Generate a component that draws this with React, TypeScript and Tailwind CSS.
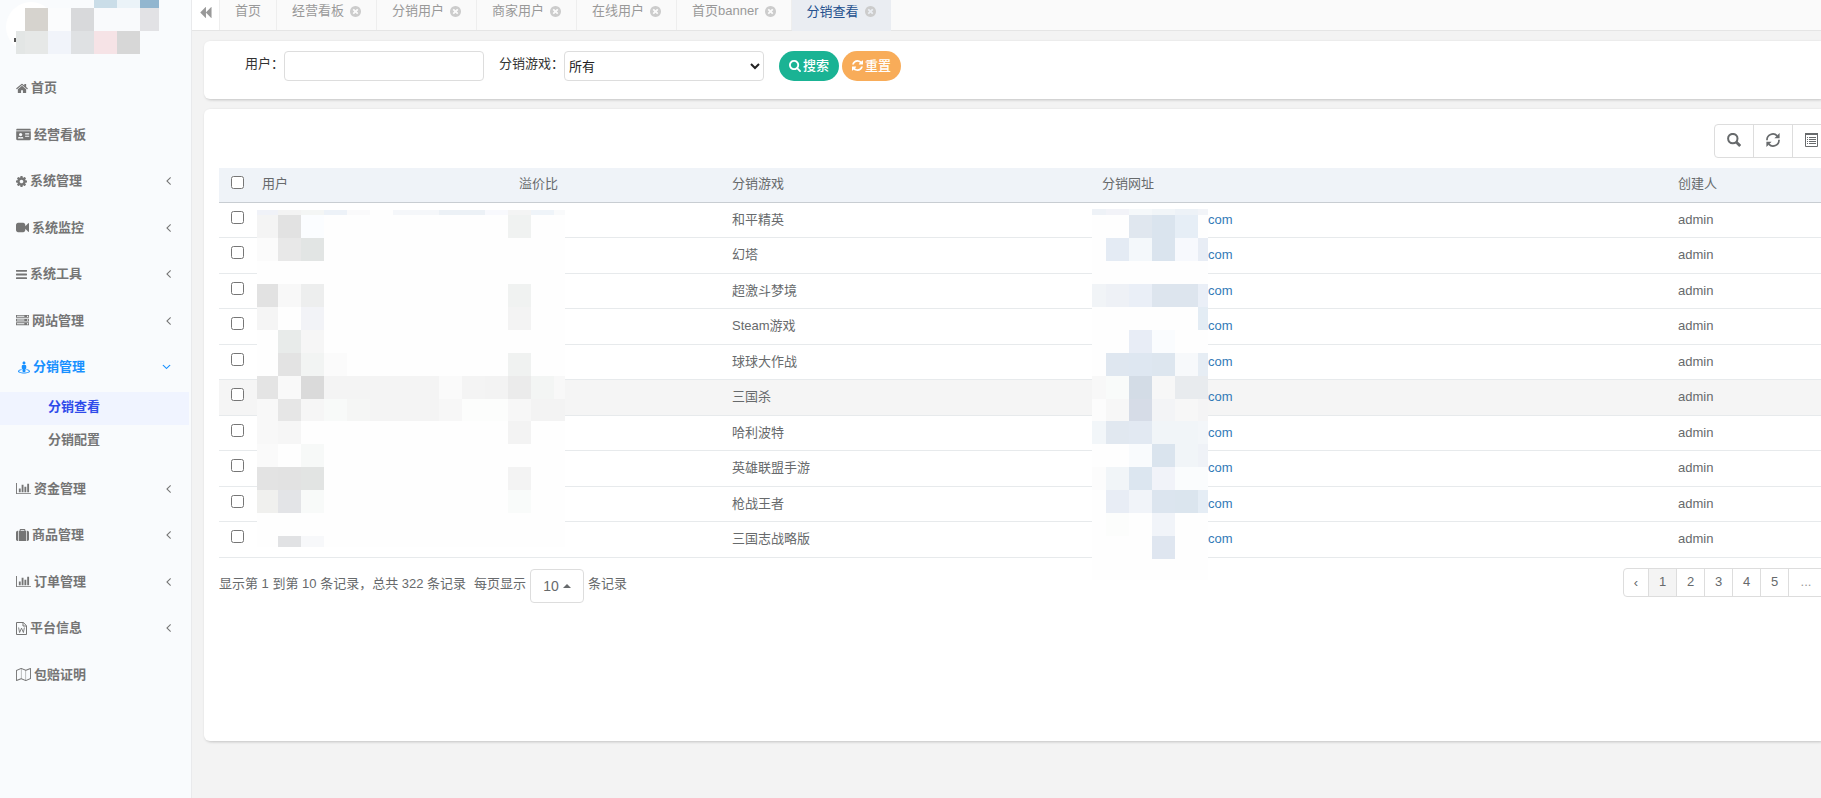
import type { ReactNode } from "react";
import { FaIdCard, FaStreetView } from "react-icons/fa";

function Glyph({ d, box, className }: { d: string; box: string; className: string }) {
  return (
    <svg viewBox={box} className={className} fill="currentColor" aria-hidden="true">
      <path d={d} />
    </svg>
  );
}

const HOME =
  "M1472 992v480q0 26-19 45t-45 19h-384v-384h-256v384h-384q-26 0-45-19t-19-45v-480q0-1 .5-3t.5-3l575-474 575 474q1 2 1 6zm223-69l-62 74q-8 9-21 11h-3q-13 0-21-7l-692-577-692 577q-12 8-24 7-13-2-21-11l-62-74q-8-10-7-23.5t11-21.5l719-599q32-26 76-26t76 26l244 204v-195q0-14 9-23t23-9h192q14 0 23 9t9 23v408l219 182q10 8 11 21.5t-7 23.5z";
const BAR_CHART =
  "M640 896v512h-256v-512h256zm384-512v1024h-256v-1024h256zm1024 1152v128h-2048v-1536h128v1408h1920zm-640-896v768h-256v-768h256zm384-384v1152h-256v-1152h256z";
const TIMES_CIRCLE =
  "M1277 1122q0-26-19-45l-181-181 181-181q19-19 19-45 0-27-19-46l-90-90q-19-19-46-19-26 0-45 19l-181 181-181-181q-19-19-45-19-27 0-46 19l-90 90q-19 19-19 46 0 26 19 45l181 181-181 181q-19 19-19 45 0 27 19 46l90 90q19 19 46 19 26 0 45-19l181-181 181 181q19 19 45 19 27 0 46-19l90-90q19-19 19-46zm387-226q0 209-103 385.5t-279.5 279.5-385.5 103-385.5-103-279.5-279.5-103-385.5 103-385.5 279.5-279.5 385.5-103 385.5 103 279.5 279.5 103 385.5z";
const GEAR =
  "M1152 896q0-106-75-181t-181-75-181 75-75 181 75 181 181 75 181-75 75-181zm512-109v222q0 12-8 23t-20 13l-185 28q-19 54-39 91 35 50 107 138 10 12 10 25t-9 23q-27 37-99 108t-94 71q-12 0-26-9l-138-108q-44 23-91 38-16 136-29 186-7 28-36 28h-222q-14 0-24.5-8.5t-11.5-21.5l-28-184q-49-16-90-37l-141 107q-10 9-25 9-14 0-25-11-126-114-165-168-7-10-7-23 0-12 8-23 15-21 51-66.5t54-70.5q-27-50-41-99l-183-27q-13-2-21-12.5t-8-23.5v-222q0-12 8-23t19-13l186-28q14-46 39-92-40-57-107-138-10-12-10-24 0-10 9-23 26-36 98.5-107.5t94.5-71.5q13 0 26 10l138 107q44-23 91-38 16-136 29-186 7-28 36-28h222q14 0 24.5 8.5t11.5 21.5l28 184q49 16 90 37l142-107q9-9 24-9 13 0 25 10 129 119 165 170 7 8 7 22 0 12-8 23-15 21-51 66.5t-54 70.5q26 50 41 98l183 28q13 2 21 12.5t8 23.5z";
const VIDEO =
  "M1792 352v1088q0 42-39 59-13 5-25 5-27 0-45-19l-403-403v166q0 119-84.5 203.5t-203.5 84.5h-704q-119 0-203.5-84.5t-84.5-203.5v-704q0-119 84.5-203.5t203.5-84.5h704q119 0 203.5 84.5t84.5 203.5v165l403-402q18-19 45-19 12 0 25 5 39 17 39 59z";
const BARS =
  "M1664 1344v128q0 26-19 45t-45 19h-1408q-26 0-45-19t-19-45v-128q0-26 19-45t45-19h1408q26 0 45 19t19 45zm0-512v128q0 26-19 45t-45 19h-1408q-26 0-45-19t-19-45v-128q0-26 19-45t45-19h1408q26 0 45 19t19 45zm0-512v128q0 26-19 45t-45 19h-1408q-26 0-45-19t-19-45v-128q0-26 19-45t45-19h1408q26 0 45 19t19 45z";
const SERVER =
  "M128 1408h1024v-128h-1024v128zm0-512h1024v-128h-1024v128zm1568 448q0-40-28-68t-68-28-68 28-28 68 28 68 68 28 68-28 28-68zm-1568-960h1024v-128h-1024v128zm1568 448q0-40-28-68t-68-28-68 28-28 68 28 68 68 28 68-28 28-68zm0-512q0-40-28-68t-68-28-68 28-28 68 28 68 68 28 68-28 28-68zm96 832v384h-1792v-384h1792zm0-512v384h-1792v-384h1792zm0-512v384h-1792v-384h1792z";
const SUITCASE =
  "M640 256h512v-128h-512v128zm-352 0v1408h-64q-92 0-158-66t-66-158v-960q0-92 66-158t158-66h64zm1120 0v1408h-1024v-1408h128v-160q0-40 28-68t68-28h576q40 0 68 28t28 68v160h128zm384 224v960q0 92-66 158t-158 66h-64v-1408h64q92 0 158 66t66 158z";
const SEARCH =
  "M1216 832q0-185-131.5-316.5t-316.5-131.5-316.5 131.5-131.5 316.5 131.5 316.5 316.5 131.5 316.5-131.5 131.5-316.5zm512 832q0 52-38 90t-90 38q-54 0-90-38l-343-342q-179 124-399 124-143 0-273.5-55.5t-225-150-150-225-55.5-273.5 55.5-273.5 150-225 225-150 273.5-55.5 273.5 55.5 225 150 150 225 55.5 273.5q0 220-124 399l343 343q37 37 37 90z";
const REFRESH =
  "M1639 1056q0 5-1 7-64 268-268 434.5t-478 166.5q-146 0-282.5-55t-243.5-157l-129 129q-19 19-45 19t-45-19-19-45v-448q0-26 19-45t45-19h448q26 0 45 19t19 45-19 45l-137 137q71 66 161 102t187 36q134 0 250-65t186-179q11-17 53-117 8-23 30-23h192q13 0 22.5 9.5t9.5 22.5zm25-800v448q0 26-19 45t-45 19h-448q-26 0-45-19t-19-45 19-45l138-138q-148-137-349-137-134 0-250 65t-186 179q-11 17-53 117-8 23-30 23h-199q-13 0-22.5-9.5t-9.5-22.5v-7q65-268 270-434.5t480-166.5q146 0 284 55.5t245 156.5l130-129q19-19 45-19t45 19 19 45z";
const BACKWARD =
  "M1683 141q19-19 32-13t13 32v1472q0 26-13 32t-32-13l-710-710q-9-9-13-19v710q0 26-13 32t-32-13l-710-710q-19-19-19-45t19-45l710-710q19-19 32-13t13 32v710q4-10 13-19z";
const MAP =
  "M2020 11q28 20 28 53v1408q0 20-11 36t-29 23l-640 256q-24 11-48 0l-616-246-616 246q-10 5-24 5-19 0-36-11-28-20-28-53v-1408q0-20 11-36t29-23l640-256q24-11 48 0l616 246 616-246q32-13 60 6zm-1284 135v1270l576 230v-1270zm-608 217v1270l544-217v-1270zm1792 1066v-1270l-544 217v1270z";
const ANGLE_LEFT =
  "M1203 544q0 13-10 23l-393 393 393 393q10 10 10 23t-10 23l-50 50q-10 10-23 10t-23-10l-466-466q-10-10-10-23t10-23l466-466q10-10 23-10t23 10l50 50q10 10 10 23z";

function DocumentIcon() {
  return (
    <svg viewBox="0 0 11 13" className="h-[13px] w-[11px]" fill="none" stroke="currentColor" aria-hidden="true">
      <path d="M.5.5h6.8l3.2 3.2v8.8H.5z" strokeLinejoin="round" />
      <path d="M7 .5V4h3.5" />
      <path d="M2.6 5.5l1 5 1.9-4.4 1.9 4.4 1-5" strokeWidth="0.9" />
    </svg>
  );
}

type MenuItem = { label: string; icon: ReactNode; arrow?: boolean; children?: string[] };

const barChart = <Glyph d={BAR_CHART} box="0 0 2048 1792" className="h-[13px] w-[15px]" />;

const menu: MenuItem[] = [
  { label: "首页", icon: <Glyph d={HOME} box="64 0 1664 1792" className="h-[13px] w-3" /> },
  { label: "经营看板", icon: <FaIdCard className="h-[13px] w-[15px]" /> },
  { label: "系统管理", arrow: true, icon: <Glyph d={GEAR} box="128 0 1536 1792" className="h-[13px] w-[11px]" /> },
  { label: "系统监控", arrow: true, icon: <Glyph d={VIDEO} box="0 0 1792 1792" className="size-[13px]" /> },
  { label: "系统工具", arrow: true, icon: <Glyph d={BARS} box="128 0 1536 1792" className="h-[13px] w-[11px]" /> },
  { label: "网站管理", arrow: true, icon: <Glyph d={SERVER} box="0 0 1792 1792" className="size-[13px]" /> },
  {
    label: "分销管理",
    arrow: true,
    icon: <FaStreetView className="ml-0.5 h-[13px] w-3" />,
    children: ["分销查看", "分销配置"],
  },
  { label: "资金管理", arrow: true, icon: barChart },
  { label: "商品管理", arrow: true, icon: <Glyph d={SUITCASE} box="0 0 1792 1792" className="size-[13px]" /> },
  { label: "订单管理", arrow: true, icon: barChart },
  { label: "平台信息", arrow: true, icon: <DocumentIcon /> },
  { label: "包赔证明", icon: <Glyph d={MAP} box="0 0 2048 1792" className="h-[13px] w-[15px]" /> },
];

const tabs = ["首页", "经营看板", "分销用户", "商家用户", "在线用户", "首页banner", "分销查看"];

const games = [
  "和平精英",
  "幻塔",
  "超激斗梦境",
  "Steam游戏",
  "球球大作战",
  "三国杀",
  "哈利波特",
  "英雄联盟手游",
  "枪战王者",
  "三国志战略版",
];

type MosaicRow = Record<number, string>;

function Mosaic({
  cols,
  rows,
  cells,
  base,
  className,
}: {
  cols: number[];
  rows: number[];
  cells: MosaicRow[];
  base: string;
  className: string;
}) {
  const width = cols[cols.length - 1];
  const height = rows[rows.length - 1];
  return (
    <svg
      width={width}
      height={height}
      className={className}
      shapeRendering="crispEdges"
      aria-hidden="true"
    >
      <rect width={width} height={height} fill={base} />
      {cells.map((row, r) =>
        Object.entries(row).map(([key, color]) => {
          const c = Number(key);
          return (
            <rect
              key={r + "-" + c}
              x={cols[c]}
              y={rows[r]}
              width={cols[c + 1] - cols[c]}
              height={rows[r + 1] - rows[r]}
              fill={color}
            />
          );
        }),
      )}
    </svg>
  );
}

const userCells: MosaicRow[] = [
  { 0: "#f0f2f8", 1: "#f3f3f3", 2: "#f4f6f5", 3: "#edf2f8", 4: "#fafafb", 6: "#f5f7fa", 7: "#f5f7fa", 8: "#ecf1f6", 9: "#ecf1f6", 10: "#f8f9fd", 11: "#f4f4f4", 12: "#eff4f9", 13: "#f9fafb" },
  { 0: "#f4f4f4", 1: "#e2e2e2", 2: "#fbfdff", 11: "#f0f2f1" },
  { 0: "#fbfbfb", 1: "#e8e8e8", 2: "#e2e5e4" },
  {},
  { 0: "#e2e2e2", 1: "#f8f8f8", 2: "#edeeee", 11: "#f0f2f1" },
  { 0: "#f5f5f5", 2: "#f2f3f7", 11: "#f3f3f3" },
  { 1: "#e8ebea", 2: "#f6f6f6" },
  { 1: "#e3e3e3", 2: "#f2f4f3", 3: "#fbfbfb", 11: "#f0f2f1" },
  { 0: "#e4e4e4", 1: "#f9f9f9", 2: "#dadada", 3: "#f4f4f4", 4: "#f4f4f4", 5: "#f4f4f4", 6: "#f4f4f4", 7: "#f4f4f4", 8: "#fafafa", 9: "#f4f4f4", 10: "#f3f3f3", 11: "#ebebeb", 12: "#f3f5f4", 13: "#f8f8f8" },
  { 0: "#f8f8f8", 1: "#e6e6e6", 2: "#f6f6f6", 3: "#f8faf9", 4: "#f5f6f5", 5: "#f4f4f4", 6: "#f4f4f4", 7: "#f4f4f4", 8: "#f7f7f7", 9: "#fcfdfc", 10: "#fcfdfc", 11: "#f7f7f7", 12: "#f3f3f3", 13: "#f3f3f3" },
  { 0: "#f8f8f8", 1: "#f6f6f6", 11: "#f3f3f3" },
  { 0: "#fafafa", 2: "#f7f9f8" },
  { 0: "#e3e3e3", 1: "#e2e2e2", 2: "#e2e4e3", 11: "#f3f3f3" },
  { 0: "#f0f0ee", 1: "#e3e4e7", 2: "#f8faf9", 11: "#f9fbfa" },
  {},
  { 1: "#e1e2e4", 2: "#f7f8fa" },
];

const urlCells: MosaicRow[] = [
  { 0: "#eef2f7", 1: "#f2f3f8", 2: "#f5f8fa", 3: "#f1f5f8", 4: "#edf2f7", 5: "#f2f4f8" },
  { 2: "#e0e7ef", 3: "#dae4ee", 4: "#e6eef6" },
  { 1: "#e4ebf4", 2: "#f4f8fb", 3: "#dae4ee", 4: "#f7f9fd", 5: "#e8edf5" },
  {},
  { 0: "#f1f4f7", 1: "#eef1f6", 2: "#eaeff7", 3: "#dde5ee", 4: "#dde5ee", 5: "#eaeff7" },
  { 5: "#e3ecf4" },
  { 2: "#e8edf6", 3: "#fafcfe" },
  { 1: "#dfe7f0", 2: "#dee7f1", 3: "#dde6ef", 4: "#f7f9fb", 5: "#e6edf4" },
  { 0: "#f8f8f8", 1: "#f9fbfa", 2: "#d3dce6", 3: "#f7f7f7", 4: "#e8ebee", 5: "#e8ebee" },
  { 0: "#fcfcfc", 1: "#f7f7f7", 2: "#d6dce7", 3: "#f3f4f6", 4: "#f7f7f7", 5: "#f4f4f5" },
  { 0: "#f2f6f9", 1: "#e1e8f0", 2: "#e2e9f2", 3: "#f1f5f8", 4: "#f1f5f8", 5: "#f3f6f9" },
  { 2: "#f9fbfd", 3: "#dae4ee", 4: "#f1f5f8", 5: "#eff2f7" },
  { 0: "#fcfcfc", 1: "#f1f5f8", 2: "#dce6f0", 3: "#f1f3f9", 4: "#fafcfd", 5: "#fafcfd" },
  { 1: "#e8edf5", 2: "#f1f4f9", 3: "#dce5ef", 4: "#dbe5ee", 5: "#e5edf5" },
  { 1: "#fcfdfc", 3: "#f1f4f9" },
  { 3: "#dfe6f0" },
  {},
];

const avatarCells: MosaicRow[] = [
  { 4: "#cadde8", 5: "#ebf3f8", 6: "#92b6cf" },
  { 1: "#d6d3ce", 2: "#fbfcfd", 3: "#d8d9db", 4: "#f9fafc", 5: "#f9fafc", 6: "#e2e2e5" },
  { 0: "#e3e6e5", 1: "#e6e8e7", 2: "#f1f4fa", 3: "#dfe1e3", 4: "#f6e3e6", 5: "#d7d7d7" },
];

function Sidebar() {
  return (
    <aside className="w-48 shrink-0 border-r border-[#e9eaec] bg-[#f9fbfd] font-semibold text-[#757575]">
      <div className="relative h-[65px] overflow-hidden pl-4">
        <span className="absolute top-0.5 left-1.5 size-[50px] rounded-full bg-white" />
        <span className="absolute top-[38px] left-3.5 h-1 w-0.5 bg-[#555555]" />
        <Mosaic
          cols={[0, 9, 32, 55, 78, 101, 124, 143]}
          rows={[0, 8, 31, 54]}
          cells={avatarCells}
          base="transparent"
          className="relative"
        />
      </div>
      <ul>
        {menu.map((item) => (
          <li key={item.label} className="group">
            <a
              href="#"
              className={
                "flex items-center gap-[3px] pr-5 pb-px pl-4 group-odd:h-[47px] group-even:h-[46px] " +
                (item.children ? "text-[#1890ff]" : "")
              }
            >
              {item.icon}
              <span>{item.label}</span>
              {item.arrow && (
                <Glyph
                  d={ANGLE_LEFT}
                  box="576 320 640 1280"
                  className={"ml-auto h-[10px] w-[5px] " + (item.children ? "mr-0.5 -rotate-90" : "")}
                />
              )}
            </a>
            {item.children && (
              <ul className="pt-px pb-2">
                {item.children.map((child, i) => (
                  <li key={child}>
                    <a
                      href="#"
                      className={
                        "mr-0.5 flex h-[33px] items-center pb-1 pl-12 " +
                        (i === 0 ? "bg-[#f0f4ff] text-[#2f4bea]" : "")
                      }
                    >
                      {child}
                    </a>
                  </li>
                ))}
              </ul>
            )}
          </li>
        ))}
      </ul>
    </aside>
  );
}

function TabBar() {
  return (
    <nav className="flex h-[31px] border-b border-[#e5e5e5] bg-[#fafafa] text-[#999999]">
      <button
        type="button"
        aria-label="收起"
        className="flex w-7 shrink-0 items-center justify-center border-r border-[#eeeeee] bg-white pb-1.5"
      >
        <Glyph d={BACKWARD} box="0 0 1792 1792" className="size-[13px]" />
      </button>
      {tabs.map((tab, i) => {
        const active = i === tabs.length - 1;
        return (
          <div
            key={tab}
            className={
              "flex shrink-0 items-center gap-1.5 px-[15px] pb-2 " +
              (active ? "-mb-px bg-[#eaedf2] text-[#23508e]" : "border-r border-[#eeeeee]")
            }
          >
            <a href="#">{tab}</a>
            {i > 0 && (
              <button type="button" aria-label={"关闭" + tab} className="text-[#cccccc]">
                <Glyph d={TIMES_CIRCLE} box="128 128 1536 1536" className="size-[11px]" />
              </button>
            )}
          </div>
        );
      })}
    </nav>
  );
}

function SearchPanel() {
  return (
    <form className="flex h-[58px] gap-[15px] rounded-l-md bg-white pt-2.5 pl-[41px] shadow-[1px_1px_3px_rgba(0,0,0,0.2)]">
      <div className="flex h-[30px]">
        <label htmlFor="user" className="pt-1 text-[#333333]">
          用户：
        </label>
        <input id="user" type="text" className="w-[200px] rounded border border-[#dddddd] bg-white px-1" />
      </div>
      <div className="flex h-[30px]">
        <label htmlFor="game" className="pt-1 text-[#333333]">
          分销游戏：
        </label>
        <select id="game" className="w-[200px] rounded border border-[#dddddd] bg-white text-[#222222]">
          <option>所有</option>
        </select>
      </div>
      <div className="flex h-[30px] gap-[3px] font-medium text-white">
        <button type="button" className="flex items-center gap-0.5 rounded-full bg-[#1ab394] px-2.5 pb-px">
          <Glyph d={SEARCH} box="64 0 1664 1792" className="h-[13px] w-3" />
          搜索
        </button>
        <button type="button" className="flex items-center gap-0.5 rounded-full bg-[#f8ac59] px-2.5 pb-px">
          <Glyph d={REFRESH} box="128 0 1536 1792" className="h-[13px] w-[11px]" />
          重置
        </button>
      </div>
    </form>
  );
}

function Toolbar() {
  const button = "flex h-[34px] w-10 items-center justify-center border border-[#dddddd] bg-white pb-0.5";
  return (
    <div className="-mr-[11px] flex justify-end text-[#676a6c]">
      <button type="button" aria-label="搜索" className={button + " rounded-l"}>
        <svg viewBox="0 0 14 14" className="size-3.5" fill="none" stroke="currentColor" aria-hidden="true">
          <circle cx="5.8" cy="5.6" r="4.7" strokeWidth="2" />
          <path d="M9.2 9l4 4" strokeWidth="2.8" />
        </svg>
      </button>
      <button type="button" aria-label="刷新" className={button + " -ml-px"}>
        <svg viewBox="0 0 14 14" className="size-3.5" fill="none" stroke="currentColor" aria-hidden="true">
          <path d="M1 7.2A5.9 5.9 0 0 1 11.2 2.9M13 6.8A5.9 5.9 0 0 1 2.8 11.1" strokeWidth="1.7" />
          <path d="M13.6 0v5.2H8.4zM.4 14V8.8h5.2z" fill="currentColor" stroke="none" />
        </svg>
      </button>
      <button type="button" aria-label="列" className={button + " -ml-px"}>
        <svg viewBox="0 0 14 14" className="size-3.5" fill="none" stroke="currentColor" aria-hidden="true">
          <path d="M.5.5h12v13H.5z" />
          <path d="M0 1h13" strokeWidth="2" />
          <path d="M2 4.5h1m1 0h7m-9 2h1m1 0h7m-9 2h1m1 0h7m-9 2h1m1 0h7" />
        </svg>
      </button>
    </div>
  );
}

function DataTable() {
  return (
    <div className="relative mt-2.5">
      <table className="w-full table-fixed border-separate border-spacing-0 text-left text-[#676a6c]">
        <colgroup>
          <col className="w-[35px]" />
          <col className="w-[257px]" />
          <col className="w-[213px]" />
          <col className="w-[370px]" />
          <col className="w-[576px]" />
          <col />
        </colgroup>
        <thead>
          <tr className="h-[35px] bg-[#eff3f8] *:border-b *:border-[#c8cdd2] *:px-2 *:font-normal">
            <th className="!px-0 pb-1.5">
              <input type="checkbox" aria-label="全选" className="mx-3 block size-[13px]" />
            </th>
            <th className="pb-0.5">用户</th>
            <th className="pb-0.5">溢价比</th>
            <th className="pb-0.5">分销游戏</th>
            <th className="pb-0.5">分销网址</th>
            <th className="pb-0.5">创建人</th>
          </tr>
        </thead>
        <tbody>
          {games.map((game, i) => (
            <tr
              key={game}
              className={
                "odd:h-[35px] even:h-9 *:border-b *:border-[#e7eaec] *:px-2 *:pb-px " +
                (i === 5 ? "bg-[#f5f5f5]" : "")
              }
            >
              <td className="!px-0 !pb-1.5">
                <input type="checkbox" aria-label={"选择" + game} className="mx-3 block size-[13px]" />
              </td>
              <td />
              <td />
              <td>{game}</td>
              <td>
                <a href="#" className="ml-[106px] text-[#337ab7]">
                  com
                </a>
              </td>
              <td>admin</td>
            </tr>
          ))}
        </tbody>
      </table>
      <Mosaic
        cols={[0, 21, 44, 67, 90, 113, 136, 159, 182, 205, 228, 251, 274, 297, 308]}
        rows={[0, 5, 28, 51, 74, 97, 120, 143, 166, 189, 211, 234, 257, 280, 303, 326, 337]}
        cells={userCells}
        base="#fefefe"
        className="absolute top-[42px] left-[38px]"
      />
      <Mosaic
        cols={[0, 14, 37, 60, 83, 106, 116]}
        rows={[0, 6, 29, 52, 75, 98, 121, 144, 167, 190, 212, 235, 258, 281, 304, 327, 350, 371]}
        cells={urlCells}
        base="#fefefe"
        className="absolute top-[41px] left-[873px]"
      />
    </div>
  );
}

function Pagination() {
  return (
    <nav className="-mr-[3px] flex h-[29px] text-[#676a6c]" aria-label="分页">
      <button type="button" className="w-[26px] rounded-l border border-[#dddddd] bg-white">
        ‹
      </button>
      {["1", "2", "3", "4", "5"].map((page) => (
        <button
          key={page}
          type="button"
          className={
            "-ml-px w-[29px] border border-[#dddddd] pb-0.5 " + (page === "1" ? "bg-[#f4f4f4]" : "bg-white")
          }
        >
          {page}
        </button>
      ))}
      <button type="button" className="-ml-px w-9 border border-[#dddddd] bg-white pb-0.5 text-[#999999]">
        ...
      </button>
    </nav>
  );
}

export default function App() {
  return (
    <div className="flex min-h-screen overflow-hidden bg-[#f3f3f3] font-['Liberation_Sans','Noto_Sans_CJK_SC',sans-serif] text-[13px] leading-[18px]">
      <Sidebar />
      <div className="min-w-0 flex-1">
        <TabBar />
        <main className="flex flex-col gap-2.5 pt-2.5 pl-3">
          <SearchPanel />
          <section className="min-h-[632px] rounded-l-md bg-white pt-[15px] pl-[15px] shadow-[1px_1px_3px_rgba(0,0,0,0.2)]">
            <Toolbar />
            <DataTable />
            <div className="flex justify-between pt-2.5 text-[#676a6c]">
              <div className="flex items-center pt-px">
                <span className="pb-1">显示第 1 到第 10 条记录，总共 322 条记录</span>
                <span className="ml-2 pb-1">每页显示</span>
                <button
                  type="button"
                  className="mx-1 flex h-[34px] w-[54px] items-center justify-center gap-1 rounded border border-[#dddddd] bg-white text-sm"
                >
                  10
                  <svg viewBox="0 0 8 4" className="h-1 w-2" fill="currentColor" aria-hidden="true">
                    <path d="M0 4l4-4 4 4z" />
                  </svg>
                </button>
                <span className="pb-1">条记录</span>
              </div>
              <Pagination />
            </div>
          </section>
        </main>
      </div>
    </div>
  );
}
